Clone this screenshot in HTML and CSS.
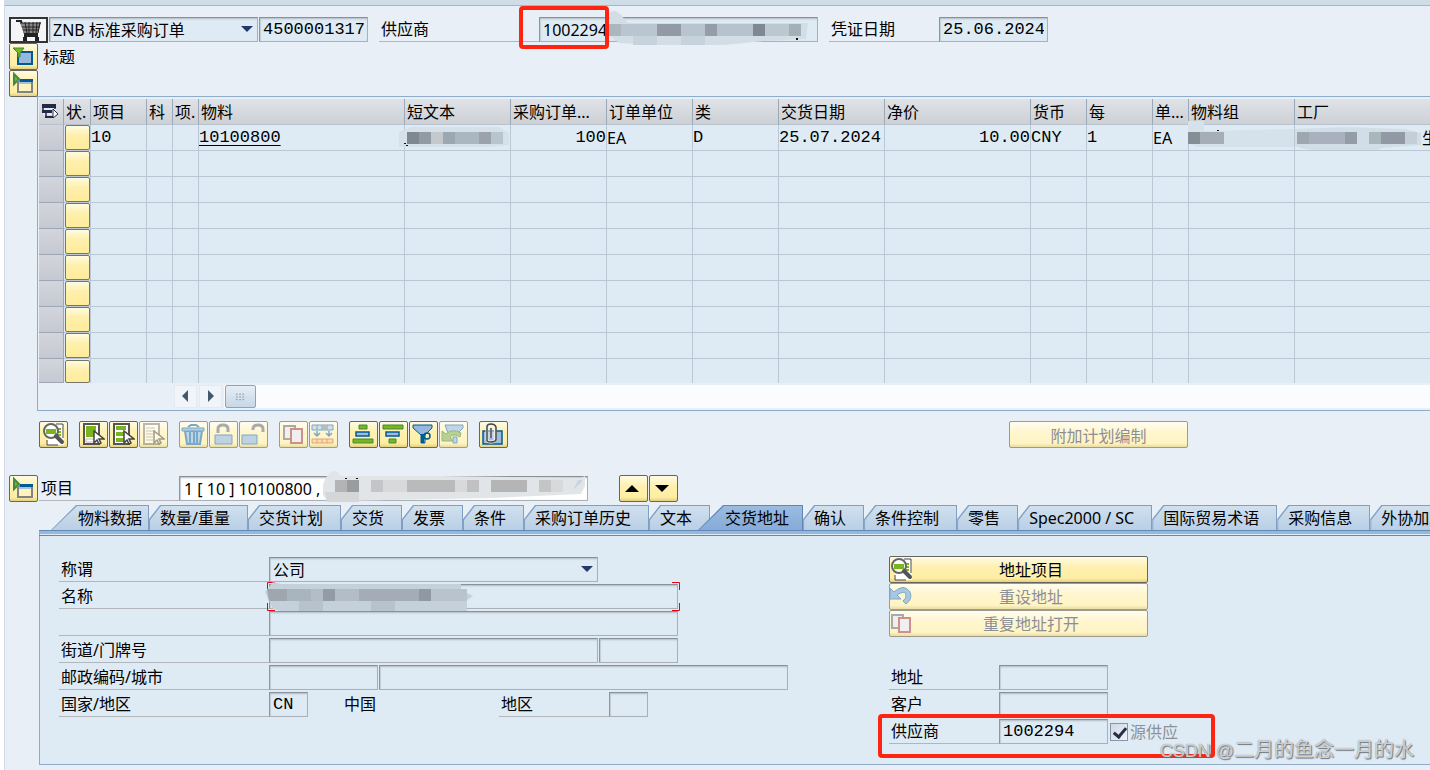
FILE: index.html
```html
<!DOCTYPE html>
<html lang="zh-CN">
<head>
<meta charset="utf-8">
<title>标准采购订单 4500001317</title>
<link rel="stylesheet" href="styles.css">
</head>
<body>
<svg class="defs" aria-hidden="true">
  <symbol id="i-find" viewBox="0 0 29 27">
    <path d="M8 2h17v22H8z" fill="#fff"/><path d="M17 3h7v14M8 19v5h11" fill="none" stroke="#444" stroke-width="1"/>
    <path d="M18 7h4v2h-4zM19 10h3v2h-3zM18 13h4v2h-4z" fill="#7ab51d"/>
    <circle cx="12" cy="10" r="7" fill="#fff" stroke="#666" stroke-width="2"/><path d="M7 8h10v5H7z" fill="#7ab51d"/>
    <path d="M17 15l6 6" stroke="#555" stroke-width="4" stroke-linecap="round"/>
  </symbol>
  <symbol id="i-open" viewBox="0 0 29 27">
    <path d="M5 4l5 5-5 5z" fill="#7ab51d" stroke="#3f8a45" stroke-width="2"/>
    <path d="M9 11h14v11H9z" fill="#fff3c0" stroke="#808489" stroke-width="2"/><path d="M10 12h12v2H10z" fill="#a9bfdb"/><path d="M11 9h13v3H11z" fill="#005b94"/>
  </symbol>
  <symbol id="i-copy" viewBox="0 0 29 27">
    <path d="M5 5h11v13H5z" fill="#efeff0" stroke="#aaa" stroke-width="2"/><path d="M12 8h11v14H12z" fill="#efeff0" stroke="#d0908a" stroke-width="2"/>
  </symbol>
  <symbol id="i-cursor" viewBox="0 0 12 16"><path d="M1 1v12l3-3 2 4 2-1-2-4h5z" fill="#fff" stroke="#444" stroke-width="1.5"/></symbol>
</svg>
<main class="shell">
  <div class="strip"></div>
  <header class="header">
    <button class="cart" aria-label="采购订单"><svg viewBox="0 0 35 22"><path d="M5 2h5l4 13h13M13 17h14" fill="none" stroke="#222" stroke-width="2"/><path d="M9 4h21l-3 10H13z" fill="#888"/><path d="M9 4h21M11 8h18M12 11h16M14 3l2 11M18 3v11M22 3v11M26 3l-1 11M29 3l-2 11" stroke="#222" fill="none"/><path d="M12 18h4v4h-4zM24 18h4v4h-4z" fill="#222"/></svg></button>
    <span class="pick w-type"><select class="field" aria-label="订单类型"><option>ZNB 标准采购订单</option></select></span>
    <input class="field mono w-109" aria-label="订单编号" value="4500001317" readonly>
    <div class="pair supplier">
      <label class="lbl w-160" for="sup">供应商</label>
      <span class="hold"><input id="sup" class="field w-279" value="1002294" readonly>
        <svg class="mosaic m-sup" viewBox="0 0 208 36"><path d="M0 2q8-6 15 6l4 4h180l-2 16-42 2-40 4H50l-40-2-8-6z" fill="#d2dde5"/><path d="M0 13h12v12H0z" fill="#acb6bf"/><path d="M12 13h36v12H12z" fill="#bac6cf"/><path d="M48 13h24v12H48z" fill="#929ba5"/><path d="M72 13h24v12H72z" fill="#b8c4ce"/><path d="M96 13h12v12H96z" fill="#949da8"/><path d="M108 13h36v12h-36z" fill="#b6c2cc"/><path d="M144 13h12v12h-12z" fill="#7f8893"/><path d="M156 13h24v12h-24z" fill="#bcc8d0"/><path d="M180 13h12v12h-12z" fill="#a4b0b8"/><path d="M24 25h24v9H24zM72 25h24v9H72z" fill="#c7d3dc"/><path d="M187 27h2v2h-2z" fill="#111"/></svg>
        <i class="mark mark-top"></i></span>
    </div>
    <div class="pair date"><label class="lbl w-110" for="date">凭证日期</label><input id="date" class="field mono w-109" value="25.06.2024" readonly></div>
  </header>
  <div class="heading"><button class="btn" aria-label="展开标题"><svg viewBox="0 0 29 27"><path d="M9 9h14v12H9z" fill="#95b8dc" stroke="#005b94" stroke-width="2"/><path d="M4 5h11l-4 5v4H9v-4z" fill="#7ab51d" stroke="#3f8a45"/></svg></button><span>标题</span></div>
  <div class="heading"><button class="btn" aria-label="展开项目概览"><svg><use href="#i-open"/></svg></button></div>

  <section class="grid">
    <table class="items">
      <colgroup><col class="c25"><col class="c27"><col class="c56"><col class="c26"><col class="c26"><col class="c206"><col class="c106"><col class="c96"><col class="c86"><col class="c86"><col class="c106"><col class="c146"><col class="c56"><col class="c66"><col class="c36"><col class="c106"><col></colgroup>
      <thead><tr><th><svg class="cfg" viewBox="0 0 18 17"><path d="M2 2h13v10H2z" fill="#e8ebee"/><path d="M1 1h14v4H1zM1 7h10v3H1zM4 13h9v2H4z" fill="#222a4a"/><path d="M2 1v9M14 1v5M5 10v4" stroke="#222a4a" stroke-width="1.5"/><path d="M12 6v9l5-4z" fill="#fff" stroke="#222a4a"/></svg></th><th>状.</th><th>项目</th><th>科</th><th>项.</th><th>物料</th><th>短文本</th><th>采购订单...</th><th>订单单位</th><th>类</th><th>交货日期</th><th>净价</th><th>货币</th><th>每</th><th>单...</th><th>物料组</th><th>工厂</th></tr></thead>
      <tbody>
        <tr><td class="sel"></td><td><button class="st" aria-label="状态"></button></td><td class="mono">10</td><td></td><td></td><td class="mono"><a href="#">10100800</a></td>
          <td><svg class="mosaic m-text" viewBox="0 0 112 26"><path d="M0 7l12-5h88l10 6v12l-20 2H0z" fill="#d5e0e9"/><path d="M8 7h12v12H8z" fill="#7f8891"/><path d="M20 7h12v12H20z" fill="#929aa3"/><path d="M32 7h12v12H32z" fill="#c5c9cd"/><path d="M44 7h12v12H44z" fill="#9ba8b2"/><path d="M56 7h24v12H56z" fill="#aab7c1"/><path d="M80 7h12v12H80z" fill="#9ba2ac"/><path d="M92 7h12v12H92z" fill="#b8c5cf"/><path d="M5 18h2v1H5zM7 20h2v1H7z" fill="#111"/></svg></td>
          <td class="mono num">100</td><td>EA</td><td class="mono">D</td><td class="mono">25.07.2024</td><td class="mono num">10.00</td><td class="mono">CNY</td><td class="mono">1</td><td>EA</td>
          <td><svg class="mosaic m-group" viewBox="0 0 106 40"><path d="M0 6h16v10l90-2v18H8l-8-4z" fill="#d5e2eb"/><path d="M0 17h12v12H0z" fill="#858d95"/><path d="M12 17h24v12H12z" fill="#a5adb7"/><path d="M29 15h2v1h-2z" fill="#111"/></svg></td>
          <td class="plant"><svg class="mosaic m-plant" viewBox="0 0 126 30"><path d="M0 5l50-2 60 2 16 4v12l-40 3-8 5H40L10 25l-10-3z" fill="#d2dee7"/><path d="M2 8h12v12H2z" fill="#9ea6b0"/><path d="M14 8h36v12H14z" fill="#a8b1bd"/><path d="M50 8h12v12H50z" fill="#949da7"/><path d="M74 8h12v12H74z" fill="#a9b7bd"/><path d="M86 8h24v12H86z" fill="#9199a4"/><path d="M110 8h12v12h-12z" fill="#c3ced7"/></svg><span>生</span></td></tr>
        <tr><td class="sel"></td><td><button class="st" aria-label="状态"></button></td><td></td><td></td><td></td><td></td><td></td><td></td><td></td><td></td><td></td><td></td><td></td><td></td><td></td><td></td><td></td></tr>
        <tr><td class="sel"></td><td><button class="st" aria-label="状态"></button></td><td></td><td></td><td></td><td></td><td></td><td></td><td></td><td></td><td></td><td></td><td></td><td></td><td></td><td></td><td></td></tr>
        <tr><td class="sel"></td><td><button class="st" aria-label="状态"></button></td><td></td><td></td><td></td><td></td><td></td><td></td><td></td><td></td><td></td><td></td><td></td><td></td><td></td><td></td><td></td></tr>
        <tr><td class="sel"></td><td><button class="st" aria-label="状态"></button></td><td></td><td></td><td></td><td></td><td></td><td></td><td></td><td></td><td></td><td></td><td></td><td></td><td></td><td></td><td></td></tr>
        <tr><td class="sel"></td><td><button class="st" aria-label="状态"></button></td><td></td><td></td><td></td><td></td><td></td><td></td><td></td><td></td><td></td><td></td><td></td><td></td><td></td><td></td><td></td></tr>
        <tr><td class="sel"></td><td><button class="st" aria-label="状态"></button></td><td></td><td></td><td></td><td></td><td></td><td></td><td></td><td></td><td></td><td></td><td></td><td></td><td></td><td></td><td></td></tr>
        <tr><td class="sel"></td><td><button class="st" aria-label="状态"></button></td><td></td><td></td><td></td><td></td><td></td><td></td><td></td><td></td><td></td><td></td><td></td><td></td><td></td><td></td><td></td></tr>
        <tr><td class="sel"></td><td><button class="st" aria-label="状态"></button></td><td></td><td></td><td></td><td></td><td></td><td></td><td></td><td></td><td></td><td></td><td></td><td></td><td></td><td></td><td></td></tr>
        <tr class="last"><td class="sel"></td><td><button class="st" aria-label="状态"></button></td><td></td><td></td><td></td><td></td><td></td><td></td><td></td><td></td><td></td><td></td><td></td><td></td><td></td><td></td><td></td></tr>
      </tbody>
    </table>
    <div class="scroll">
      <button class="arrow" aria-label="向左"><svg viewBox="0 0 23 23"><path d="M14 5v12l-6-6z" fill="#44586b"/></svg></button>
      <button class="arrow" aria-label="向右"><svg viewBox="0 0 23 23"><path d="M9 5v12l6-6z" fill="#44586b"/></svg></button>
      <div class="track"><button class="thumb" aria-label="滚动"><svg viewBox="0 0 30 23"><path d="M10 9h9M10 12h9M10 15h9" stroke="#8295a8" stroke-dasharray="2 1.5"/></svg></button></div>
    </div>
  </section>

  <div class="toolbar">
    <div class="set"><button class="btn" aria-label="明细"><svg><use href="#i-find"/></svg></button></div>
    <div class="set">
      <button class="btn" aria-label="选择"><svg viewBox="0 0 29 27"><path d="M5 3h15v20H5z" fill="#fff" stroke="#555" stroke-width="2"/><path d="M7 5h10v11H7z" fill="#7ab51d"/><path d="M7 18h8v3H7z" fill="none" stroke="#c9b5b5"/><use href="#i-cursor" x="14" y="9" width="12" height="16"/></svg></button>
      <button class="btn" aria-label="全选"><svg viewBox="0 0 29 27"><path d="M5 3h15v20H5z" fill="#fff" stroke="#555" stroke-width="2"/><path d="M7 5h10v4H7zM7 11h9v4H7zM7 17h9v4H7z" fill="#7ab51d"/><use href="#i-cursor" x="14" y="9" width="12" height="16"/></svg></button>
      <button class="btn" disabled aria-label="取消选择"><svg class="dim" viewBox="0 0 29 27"><path d="M5 3h15v20H5z" fill="#fff" stroke="#777" stroke-width="2"/><path d="M7 7h9M7 10h9M7 13h9M7 16h7M7 19h7" stroke="#999"/><use href="#i-cursor" x="14" y="9" width="12" height="16"/></svg></button>
    </div>
    <div class="set">
      <button class="btn" disabled aria-label="删除"><svg viewBox="0 0 29 27"><path d="M6 10h17l-2 13H8z" fill="#c2d5e4" stroke="#7aa9c8" stroke-width="2"/><path d="M3 7h22v3H3z" fill="#b4cee0" stroke="#7aa9c8"/><path d="M9 6l3-2h5l3 2M11 11v11M15 11v11M18 11v11" fill="none" stroke="#7aa9c8" stroke-width="2"/></svg></button>
      <button class="btn" disabled aria-label="锁定"><svg viewBox="0 0 29 27"><path d="M9 12V8q0-4 5-4t5 4v3" fill="none" stroke="#aaa" stroke-width="3"/><path d="M6 14h17v9H6z" fill="#bfd2e2" stroke="#7aa9c8"/></svg></button>
      <button class="btn" disabled aria-label="解锁"><svg viewBox="0 0 29 27"><path d="M14 9V8q0-4 5-4t5 4v3" fill="none" stroke="#aaa" stroke-width="3"/><path d="M3 14h15v9H3z" fill="#bfd2e2" stroke="#7aa9c8"/></svg></button>
    </div>
    <div class="set">
      <button class="btn" disabled aria-label="复制"><svg><use href="#i-copy"/></svg></button>
      <button class="btn" disabled aria-label="缺省值"><svg viewBox="0 0 29 27"><path d="M3 4h21v5H3zM8 4v5M13 4v5M18 4v5" fill="#d3e0ea" stroke="#7aa9c8"/><path d="M14 4h4v5h-4z" fill="#bbb"/><path d="M8 10v5M5 12l3 3 3-3M20 10v5M17 12l3 3 3-3" fill="none" stroke="#7aa9c8" stroke-width="1.5"/><path d="M3 18h21v4H3zM8 18v4M13 18v4M18 18v4" fill="#fbe0a5" stroke="#e5a080"/></svg></button>
    </div>
    <div class="set">
      <button class="btn" aria-label="升序"><svg viewBox="0 0 29 27"><path d="M10 4h8v4h-8z" fill="#7ab51d" stroke="#3f8a45"/><path d="M7 11h13v4H7z" fill="#9dbde0" stroke="#005b94" stroke-width="1.5"/><path d="M4 18h20v4H4z" fill="#7ab51d" stroke="#3f8a45"/></svg></button>
      <button class="btn" aria-label="降序"><svg viewBox="0 0 29 27"><path d="M4 4h20v4H4z" fill="#7ab51d" stroke="#3f8a45"/><path d="M7 11h13v4H7z" fill="#9dbde0" stroke="#005b94" stroke-width="1.5"/><path d="M10 18h7v4h-7z" fill="#7ab51d" stroke="#3f8a45"/></svg></button>
      <button class="btn" aria-label="过滤"><svg viewBox="0 0 29 27"><path d="M4 4h19v3l-7 7v8h-4v-8L4 7z" fill="#95b8dc" stroke="#005b94"/><path d="M12 13h3v9h-3z" fill="#005b94"/><circle cx="18" cy="15" r="3" fill="none" stroke="#005b94" stroke-width="1.5"/></svg></button>
      <button class="btn" disabled aria-label="删除过滤"><svg viewBox="0 0 29 27"><path d="M6 4h18v3l-5 5H9z" fill="#c2d5e4" stroke="#7aa9c8"/><path d="M14 16h4v6h-4z" fill="#c2d5e4" stroke="#7aa9c8"/><path d="M3 20V10l4 3q6-6 15-1l-1 4q-6-4-10 0l3 4z" fill="#b7d28c" stroke="#9ab58c"/></svg></button>
    </div>
    <div class="set"><button class="btn" aria-label="附件"><svg viewBox="0 0 29 27"><path d="M4 10h19v13H4z" fill="#9dbde0" stroke="#005b94" stroke-width="1.5"/><path d="M16 6v12q0 3-4 3t-4-3V6q0-3 4-3t4 3M12 7v10" fill="none" stroke="#eee" stroke-width="3"/><path d="M17 6v12q0 3-5 3t-4-3V6q0-3 4-3t5 3M12 7v10" fill="none" stroke="#444" stroke-width="1.5"/></svg></button></div>
    <button class="btn plan" disabled>附加计划编制</button>
  </div>

  <div class="itembar">
    <button class="btn" aria-label="展开项目"><svg><use href="#i-open"/></svg></button>
    <label class="lbl w-140" for="item">项目</label>
    <span class="hold"><input id="item" class="field white w-409" value="1 [ 10 ] 10100800 ," readonly>
      <svg class="mosaic m-item" viewBox="0 0 264 34"><path d="M0 14l4-8q8-10 14 0h100l140 2 4-2v10l-4 8-90 4-150 3-14-1q-8-8-4-16z" fill="#e2e5e8"/><path d="M12 10h12v12H12z" fill="#b3b4b6"/><path d="M24 10h12v12H24z" fill="#9b9ca0"/><path d="M2 22h34v10H4z" fill="#d5d6d8"/><path d="M48 10h12v12H48z" fill="#c5c5c7"/><path d="M60 10h24v12H60zM132 10h12v12h-12zM228 10h12v12h-12z" fill="#d8d9da"/><path d="M84 10h48v12H84z" fill="#b9bbbb"/><path d="M144 10h12v12h-12z" fill="#c1c1c3"/><path d="M168 10h36v12h-36z" fill="#b5b5b6"/><path d="M216 10h12v12h-12z" fill="#c5c5c6"/><path d="M250 20l9-8v-2h-4z" fill="#cdd3dd"/><path d="M22 8h2v1h-2zM33 8h2v1h-2z" fill="#111"/></svg></span>
    <span class="set nav"><button class="btn" aria-label="上一项"><svg viewBox="0 0 29 27"><path d="M6 17l7-7 7 7z"/></svg></button><button class="btn" aria-label="下一项"><svg viewBox="0 0 29 27"><path d="M6 10l7 7 7-7z"/></svg></button></span>
  </div>

  <nav class="tabs" role="tablist">
    <button class="tab first" role="tab">物料数据</button><button class="tab" role="tab">数量/重量</button><button class="tab" role="tab">交货计划</button><button class="tab" role="tab">交货</button><button class="tab" role="tab">发票</button><button class="tab" role="tab">条件</button><button class="tab" role="tab">采购订单历史</button><button class="tab" role="tab">文本</button><button class="tab active" role="tab" aria-selected="true">交货地址</button><button class="tab" role="tab">确认</button><button class="tab" role="tab">条件控制</button><button class="tab" role="tab">零售</button><button class="tab" role="tab">Spec2000 / SC</button><button class="tab" role="tab">国际贸易术语</button><button class="tab" role="tab">采购信息</button><button class="tab" role="tab">外协加工</button>
  </nav>
  <section class="panel">
    <div class="form">
      <div class="row"><label class="lbl w-210" for="f1">称谓</label><span class="pick w-329"><select id="f1" class="field"><option>公司</option></select></span></div>
      <div class="row"><label class="lbl w-210" for="f2">名称</label><span class="hold"><input id="f2" class="field w-409" readonly><svg class="focus" viewBox="0 0 413 29"><path d="M8 .5H.5V8M405 .5h7.500V8M8 28.500H.5V21M405 28.500h7.500V21" fill="none" stroke="#e60012"/></svg>
        <svg class="mosaic m-name" viewBox="0 0 208 32"><path d="M0 12l8-10 8 2h180v6l12 6-6 4v11H16l-8-2-4-8z" fill="#c4d0da"/><path d="M2 9h20v12H4z" fill="#9fa6ae"/><path d="M22 9h24v12H22z" fill="#a8b4be"/><path d="M46 9h12v12H46zM70 9h24v12H70z" fill="#b2bdc7"/><path d="M58 9h12v12H58z" fill="#939ca6"/><path d="M94 9h60v12H94z" fill="#a3acb7"/><path d="M154 9h12v12h-12z" fill="#8f98a3"/><path d="M166 9h36v12h-36z" fill="#b8c3ce"/><path d="M34 21h24v10H34zM106 21h24v10h-24z" fill="#b8c2cb"/></svg></span></div>
      <div class="row"><span class="lbl w-210"></span><input class="field w-409" aria-label="名称 2" readonly></div>
      <div class="row"><label class="lbl w-210" for="f4">街道/门牌号</label><input id="f4" class="field w-329" readonly><input class="field w-79" aria-label="门牌号" readonly></div>
      <div class="row"><label class="lbl w-210" for="f5">邮政编码/城市</label><input id="f5" class="field w-109" readonly><input class="field w-409" aria-label="城市" readonly></div>
      <div class="row"><label class="lbl w-210" for="f6">国家/地区</label><input id="f6" class="field mono w-39" value="CN" readonly><span class="country">中国</span><label class="lbl w-110" for="f7">地区</label><input id="f7" class="field w-39" readonly></div>
    </div>
    <div class="side">
      <button class="btn wide"><svg><use href="#i-find"/></svg>地址项目</button>
      <button class="btn wide" disabled><svg viewBox="0 0 29 27"><path d="M3 5v11h11l-4-4q7-5 9-1 1 4-3 7l3 3q7-5 4-12-6-9-16 0z" fill="#a9c8df" stroke="#7aa9c8"/></svg>重设地址</button>
      <button class="btn wide" disabled><svg><use href="#i-copy"/></svg>重复地址打开</button>
      <div class="sidefields">
        <div class="row"><label class="lbl w-110" for="g1">地址</label><input id="g1" class="field w-109" readonly></div>
        <div class="row"><label class="lbl w-110" for="g2">客户</label><input id="g2" class="field w-109" readonly></div>
        <div class="row marked"><label class="lbl w-110" for="g3">供应商</label><input id="g3" class="field mono w-109" value="1002294" readonly><input type="checkbox" id="g4" class="check" checked disabled><label class="src" for="g4">源供应</label><i class="mark mark-low"></i></div>
      </div>
    </div>
  </section>
  <div class="water"><span>CSDN @</span>二月的鱼念一月的水</div>
</main>
</body>
</html>
```
FILE: styles.css
```css
* { box-sizing: border-box; }
body, button, input, select { font-family: "Noto Sans", "Noto Sans CJK SC", sans-serif; font-size: 16px; color: #000; }
body { margin: 0; background: #fff; overflow: hidden; line-height: 24px; }
button, input, select { margin: 0; border-radius: 0; }
button { padding: 0; }
svg { display: block; }
.defs { display: none; }
.shell { position: relative; margin-left: 4px; min-height: 100vh; border-left: 1px solid #d3d9e6; background: #e8eff7; overflow: hidden; }
.strip { height: 6px; background: #cfdde8; border-bottom: 1px solid #9fb6cc; }
.mono { font-family: "Liberation Mono", "Noto Sans CJK SC", monospace; font-size: 17px; }

.w-39 { width: 39px; } .w-79 { width: 79px; } .w-109 { width: 109px; } .w-110 { width: 110px; }
.w-140 { width: 140px; } .w-160 { width: 160px; } .w-210 { width: 210px; } .w-279 { width: 279px; }
.w-329 { width: 329px; } .w-409 { width: 409px; } .w-type { width: 209px; }

.field { display: block; height: 25px; padding: 0 3px; background: #deebf5; border: 1px solid #a9b0b6; border-top-color: #8a9097; border-left-color: #8f969c; box-shadow: inset 0 2px 2px -1px #b3bbc2, inset 1px 0 1px #c5ced5; outline: 0; flex: none; }
.field.white { padding: 0 4px; background: #fff; }
.pick { position: relative; flex: none; }
.pick select { width: 100%; appearance: none; line-height: 22px; }
.pick::after { content: ""; position: absolute; right: 5px; top: 9px; border: 6px solid transparent; border-top-color: #24386b; border-bottom: 0; }
.lbl { display: block; flex: none; height: 25px; padding-left: 2px; border-bottom: 1px solid #b2b6ba; line-height: 25px; white-space: nowrap; }
.hold { position: relative; flex: none; }
.mosaic { position: absolute; }

.header { display: flex; gap: 1px; padding: 11px 0 0 4px; }
.cart { width: 39px; height: 26px; border: 2px solid #333; background: #f3f5f8; flex: none; }
.cart svg { width: 35px; height: 22px; }
.pair { display: flex; }
.supplier { margin-left: 10px; }
.date { margin-left: 10px; }
.m-sup { left: 70px; top: -6px; width: 208px; height: 36px; }
.mark { position: absolute; border: 4px solid #ff2412; border-radius: 4px; pointer-events: none; }
.mark-top { left: -20px; top: -11px; width: 90px; height: 43px; }

.heading { display: flex; gap: 5px; padding-left: 4px; line-height: 28px; height: 27px; }
.btn { display: block; flex: none; width: 29px; height: 27px; border: 1px solid #66665e; border-radius: 2px; background: linear-gradient(#fffbe4, #fef0b0 40%, #feeea3 85%, #e3cf80); position: relative; }
.btn svg { width: 29px; height: 27px; margin: -1px; }
.btn:disabled { border-color: #9d9a8e; background: linear-gradient(#fffdf0, #fff6cf 40%, #fff4c4 85%, #eadca0); color: #8c8f96; }
.dim { opacity: .5; }

.grid { margin: -1px 0 0 32px; padding: 2px 0 2px 1px; border: 1px solid #8fabca; border-right: 0; }
.items { width: 100%; table-layout: fixed; border-collapse: separate; border-spacing: 0; background: #deebf5; }
.c25 { width: 25px; } .c26 { width: 26px; } .c27 { width: 27px; } .c36 { width: 36px; } .c56 { width: 56px; } .c66 { width: 66px; }
.c86 { width: 86px; } .c96 { width: 96px; } .c106 { width: 106px; } .c146 { width: 146px; } .c206 { width: 206px; }
.items th { height: 26px; padding: 0 0 0 2px; border-right: 1px solid #9aa9b8; border-bottom: 1px solid #b9c3ce; background: linear-gradient(#dfe3e7, #cdd1d6); font-weight: 400; text-align: left; line-height: 24px; white-space: nowrap; overflow: hidden; }
.items td { height: 26px; padding: 0; border-right: 1px solid #bac8d6; border-bottom: 1px solid #bac8d6; line-height: 24px; white-space: nowrap; position: relative; }
.items .last td { height: 24px; border-bottom: 0; }
.items td.sel { background: linear-gradient(#d2d5db, #c5c9d2); border-color: #9ea5b5; }
.items .last .sel { border-bottom: 1px solid #9ea5b5; }
.items td.num { text-align: right; }
.items a { color: #000; text-underline-offset: 3px; text-decoration-thickness: 1px; }
.items th:last-child, .items td:last-child { border-right: 0; }
.items td.plant { overflow: hidden; }
.plant span { margin-left: 127px; }
.cfg { width: 18px; height: 17px; }
.st { display: block; width: 25px; height: 25px; margin-left: 1px; border: 1px solid #77766a; border-radius: 2px; background: linear-gradient(#fffbe0, #fef0ac 40%, #feeb9c); position: relative; }
.last .st { height: 23px; }
.m-text { left: -6px; top: 0; width: 112px; height: 26px; z-index: 1; }
.m-group { left: -1px; top: -10px; width: 106px; height: 40px; z-index: 1; }
.m-plant { left: 0; top: -1px; width: 126px; height: 30px; }

.scroll { display: flex; gap: 2px; padding: 2px 0 0 135px; }
.arrow { width: 23px; height: 23px; border: 1px solid #e4eaf1; background: #f1f5fa; flex: none; }
.arrow svg { width: 23px; height: 23px; margin: -1px; }
.track { flex: 1; background: #fbfcfd; padding-left: 1px; }
.thumb { display: block; width: 31px; height: 23px; border: 1px solid #8da3ba; border-radius: 2px; background: linear-gradient(#e5eef6, #c7d7e6); }
.thumb svg { width: 29px; height: 21px; }

.toolbar { display: flex; gap: 11px; padding: 10px 0 0 34px; }
.set { display: flex; gap: 1px; }
.plan { width: 179px; margin-left: 490px; }
.itembar { display: flex; gap: 1px; padding: 27px 0 0 4px; align-items: center; }
.nav { margin-left: 30px; }
.m-item { left: 144px; top: -6px; width: 264px; height: 34px; }

.tabs { display: flex; padding: 3px 0 0 46px; overflow: hidden; }
.tab { position: relative; z-index: 0; flex: none; height: 25px; padding: 2px 18px 0 11px; border: 0; background: none; line-height: 23px; white-space: nowrap; }
.tab::before, .tab::after { content: ""; position: absolute; z-index: -1; inset: 0; clip-path: polygon(0 14px, 11px 0, 100% 0, 100% 100%, 0 100%); background: #7fa0c4; }
.tab::after { inset: 1px 1px 0 1px; background: linear-gradient(#d0e0ee, #b9cfe6); }
.first { padding: 2px 7px 0 27px; }
.first::before, .first::after, .active::before, .active::after { clip-path: polygon(0 100%, 25px 0, 100% 0, 100% 100%); }
.active { z-index: 1; margin-left: -12px; padding: 2px 14px 0 27px; }
.active::before { background: #5f86b5; }
.active::after { background: linear-gradient(#9bbbe0, #86abd7); }
.panel { display: flex; gap: 101px; margin-left: 34px; padding: 22px 0 19px 19px; border: 1px solid #8fabca; border-top: 4px solid #96b7de; border-right: 0; background: #deebf5; position: relative; }
.panel::before { content: ""; position: absolute; left: -1px; right: 0; top: -4px; height: 4px; border: solid #6288b5; border-width: 1px 0; }
.form { display: flex; flex-direction: column; gap: 2px; padding-top: 1px; width: 729px; flex: none; }
.row { display: flex; gap: 1px; position: relative; }
.lbl + .field, .lbl + .pick, .lbl + .hold { margin-left: -1px; }
.supplier .hold, .date .field { margin-left: 0; }
.country { width: 189px; padding-left: 35px; line-height: 25px; }
.focus { position: absolute; left: -2px; top: -2px; width: 413px; height: 29px; pointer-events: none; }
.m-name { left: -4px; top: -4px; width: 208px; height: 32px; }
.wide { width: 259px; padding-left: 25px; line-height: 24px; }
.wide svg { position: absolute; left: -2px; top: 0; }
.sidefields { display: flex; flex-direction: column; gap: 2px; padding-top: 28px; }
.check { appearance: none; width: 18px; height: 18px; margin: 4px 0 0 1px; border: 1px solid #8a96a8; background: linear-gradient(135deg, #cfd8e4, #eef3f8); position: relative; }
.check:checked::after { content: ""; position: absolute; left: 5px; top: 1px; width: 5px; height: 10px; border: solid #2a2d48; border-width: 0 3px 3px 0; transform: rotate(40deg); }
.src { color: #8c9198; padding-left: 1px; line-height: 26px; }
.mark-low { left: -11px; top: -5px; width: 337px; height: 44px; }
.water { position: absolute; right: 16px; bottom: 4px; font-size: 20px; line-height: 30px; color: rgba(255, 255, 255, .65); text-shadow: 1px 1px 1px #6c737b, 0 0 1px #777; white-space: nowrap; }
.water span { font-family: "Liberation Sans", sans-serif; font-size: 18px; }
```
